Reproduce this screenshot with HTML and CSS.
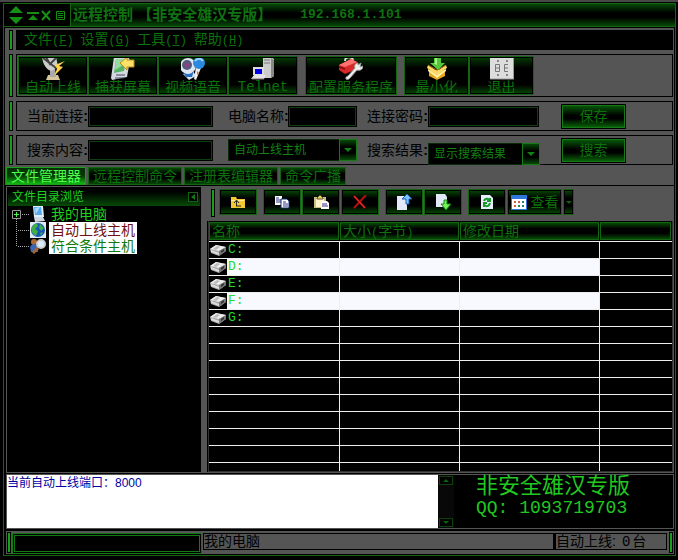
FILE: index.html
```html
<!DOCTYPE html>
<html lang="zh-CN">
<head>
<meta charset="utf-8">
<title>远程控制</title>
<link rel="stylesheet" href="styles.css">
</head>
<body>
<svg class="defs" aria-hidden="true">
  <symbol id="drive" viewBox="0 0 16 12">
    <path d="M0 5 6 1 16 3 16 7 9 12 1 9Z" fill="#aaa"/>
    <path d="M0 5 6 1 16 3 9 7Z" fill="#eee"/>
    <path d="M3 5 7 2 10 3 6 6Z" fill="#bbb"/>
    <path d="M9 7 16 3v4l-7 5Z" fill="#777"/>
    <path d="M1 6l8 3v2L1 8Z" fill="#ddd"/>
    <path d="M11 7l3-2v2l-3 2Z" fill="#333"/>
  </symbol>
</svg>
<div class="window">
  <header class="titlebar">
    <div class="sysbox">
      <svg width="57" height="18" viewBox="0 0 57 18" fill="#159015">
        <path d="M7 0 14 7H0ZM7 18 0 11H14Z"/>
        <path d="M18 6h12v2H18ZM24 9l5 5H19Z"/>
        <path d="M33 5l8 9M41 5l-8 9" stroke="#159015" stroke-width="2"/>
        <path d="M47.500 5.500h8v8h-8zM49 7.500h5M49 9.500h5M49 11.500h5" fill="none" stroke="#159015"/>
      </svg>
    </div>
    <h1>远程控制 【非安全雄汉专版】</h1>
    <span class="address">192.168.1.101</span>
  </header>

  <div class="chrome">
    <div class="band">
      <i class="grip"></i>
      <nav class="menu">
        <a href="#">文件<span>(<u>F</u>)</span></a>
        <a href="#">设置<span>(<u>G</u>)</span></a>
        <a href="#">工具<span>(<u>T</u>)</span></a>
        <a href="#">帮助<span>(<u>H</u>)</span></a>
      </nav>
    </div>

    <div class="band">
      <i class="grip"></i>
      <div class="toolbar">
        <div class="group">
          <button class="tool">
            <svg width="24" height="23" viewBox="0 0 24 23"><path d="M7 18h10l2 5H5Z" fill="#d8c8a0"/><path d="M9 11h5l1 9H9Z" fill="#aaa"/><path d="M1 0h14l2 9-6 5C5 13 2 7 1 0Z" fill="#ccc"/><path d="M2 1l13 10M5 0l4 7 7-7" stroke="#444" fill="none" stroke-width="2"/><path d="M24 4 14 8l2 4-3 7 9-9-4-1Z" fill="#ffd34a"/></svg>
            <span>自动上线</span></button>
          <button class="tool">
            <svg width="24" height="23" viewBox="0 0 24 23"><path d="M3 0h14l2 3-3 17-15 3L0 21Z" fill="#d5d9df"/><path d="M5 2h10l-2 12-10 2Z" fill="#55b565"/><path d="M5 2h10l-1 5-10 6Z" fill="#94dba0"/><path d="M5 18h9M4 21h9" stroke="#446"/><path d="M9 6l7-6v3h7v7h-7v3Z" fill="#ffe16a" stroke="#b98a18"/></svg>
            <span>捕获屏幕</span></button>
          <button class="tool">
            <svg width="24" height="23" viewBox="0 0 24 23"><path d="M2 17 12 14l3 5-7 4Z" fill="#d9e4f4"/><circle cx="7" cy="9" r="8" fill="#e2e8f2"/><path d="M0 12c3 7 11 6 13 1l-2 7H5Z" fill="#2b6fc4"/><circle cx="6" cy="8" r="5" fill="#555a80"/><circle cx="6" cy="8" r="2" fill="#a03878"/><path d="M15 10l5 1-5 12-2-1Z" fill="#eee"/><path d="M16 14l2 2-2 2Z" fill="#e06a20"/><circle cx="18" cy="6" r="6" fill="#2d88e0"/><path d="M14 4c3-4 6-2 8 0" stroke="#9cd3ff" fill="none" stroke-width="2"/></svg>
            <span>视频语音</span></button>
          <button class="tool">
            <svg width="24" height="23" viewBox="0 0 24 23"><path d="M12 0h8l3 2v17l-3 2h-8Z" fill="#ccc"/><path d="M20 1l3 2v16l-3 2Z" fill="#888"/><path d="M13 3h6M13 6h6" stroke="#777"/><path d="M2 10h11v8H2Z" fill="#ddd"/><path d="M4 12h7v5H4Z" fill="#0000e8"/><path d="M3 18h12l-2 4H0Z" fill="#e4e4e4"/><path d="M1 22h12" stroke="#777"/></svg>
            <span class="latin">Telnet</span></button>
        </div>
        <div class="group">
          <button class="tool wide">
            <svg width="24" height="23" viewBox="0 0 24 23"><path d="M6 4c0-5 8-5 8 0" stroke="#ddd" fill="none" stroke-width="2"/><path d="M0 8 12 2l6 3v7L6 17 0 13Z" fill="#d82828"/><path d="M0 8 12 2l6 3L6 10Z" fill="#ff7070"/><path d="M0 9l6 2v2l-6-2Z" fill="#8c0e0e"/><path d="M19 8l3-2-1 4 3-1c0 4-4 5-6 4l-7 8c-4 4-6-1-2-2l7-8c-1-2 0-5 3-5Z" fill="#eee" stroke="#999"/></svg>
            <span>配置服务程序</span></button>
        </div>
        <div class="group">
          <button class="tool narrow">
            <svg width="24" height="23" viewBox="0 0 24 23"><path d="M4 13h16v6l-8 4-8-4Z" fill="#e9a820"/><path d="M3 8l9 6 9-6 1 3-10 7L2 11Z" fill="#ffd96a"/><path d="M3 12l9 6 9-6v2l-9 7-9-7Z" fill="#fff1a0"/><path d="M3 8l9 5 9-5" stroke="#a06a00" fill="none"/><path d="M9 0h7v6h4l-7 7-8-7h4Z" fill="#54c83a"/><path d="M10 0h2v8l-4-2h2Z" fill="#a8f08a"/></svg>
            <span>最小化</span></button>
          <button class="tool narrow">
            <svg width="24" height="23" viewBox="0 0 24 23"><path d="M0 0h24v22H0Z" fill="#ddd"/><path d="M0 22h24M23.500 0v22" stroke="#999"/><path d="M5.500 7.500h4v7h-4zM6 11h4M18 7.500h-3.500v7H18M15 11h3" stroke="#777" fill="none"/><path d="M7 3h2v2H7ZM16 3h2v2h-2ZM7 17h2v2H7ZM16 17h2v2h-2Z" fill="#888"/></svg>
            <span>退出</span></button>
        </div>
      </div>
    </div>

    <div class="band">
      <i class="grip"></i>
      <form class="fields">
        <label for="conn">当前连接<b>:</b></label><input id="conn" type="text">
        <label class="second" for="pc">电脑名称<b>:</b></label><input id="pc" type="text">
        <label class="third" for="pwd">连接密码<b>:</b></label><input id="pwd" type="password">
        <button type="button" class="action">保存</button>
      </form>
    </div>

    <div class="band">
      <i class="grip"></i>
      <form class="fields">
        <label for="query">搜索内容<b>:</b></label><input id="query" type="text">
        <div class="combo scope"><select aria-label="搜索范围"><option>自动上线主机</option></select><i class="drop"></i></div>
        <label class="third" for="result">搜索结果<b>:</b></label>
        <div class="combo result"><select id="result"><option>显示搜索结果</option></select><i class="drop"></i></div>
        <button type="button" class="action">搜索</button>
      </form>
    </div>

    <div class="tabs">
      <button class="tab active">文件管理器</button>
      <button class="tab">远程控制命令</button>
      <button class="tab">注册表编辑器</button>
      <button class="tab">命令广播</button>
    </div>
  </div>

  <main class="workspace">
    <aside class="sidebar">
      <h2>文件目录浏览<button class="collapse" aria-label="折叠"><svg width="4" height="6" viewBox="0 0 4 6" fill="#117a11"><path d="M4 0v6L0 3Z"/></svg></button></h2>
      <div class="tree">
        <svg class="lines" width="18" height="48" viewBox="0 0 18 48" fill="none">
          <path d="M10 8.500h7M4.500 13v28M6 24.500h11M6 40.500h11" stroke="#aaa" stroke-dasharray="1 1"/>
          <path d="M.5 4.500h8v8h-8z" stroke="#999"/><path d="M2 8.500h5M4.500 6v5" stroke="#3fff3f"/>
        </svg>
        <ul>
          <li><svg width="16" height="16" viewBox="0 0 16 16"><path d="M3 0h10l1 11H4Z" fill="#e2edf8"/><path d="M4 1h7l1 8H5Z" fill="#56a8ec"/><path d="M5 2l5-1-4 7Z" fill="#a9dcff"/><path d="M4 11h9l2 4-10 1Z" fill="#cfd8e2"/></svg><a href="#" class="root">我的电脑</a></li>
          <li><svg width="16" height="16" viewBox="0 0 16 16"><path d="M0 0h16v16H0Z" fill="#dfeaf5"/><circle cx="8" cy="8" r="7" fill="#1756b8"/><path d="M2 5c3-5 6-4 6-1L5 7l3 2-2 5C2 12 1 9 2 5ZM10 2l4 4-3 3-2-3ZM10 11l3-1-2 4Z" fill="#3fae48"/></svg><a href="#" class="auto">自动上线主机</a></li>
          <li><svg width="16" height="16" viewBox="0 0 16 16"><circle cx="4" cy="4" r="3" fill="#b06a34"/><path d="M0 9c2-4 7-4 8 1v4H1Z" fill="#3867b7"/><path d="M8 10l-5 5" stroke="#a46638" stroke-width="3"/><circle cx="11" cy="6" r="4" fill="#d9ecff" stroke="#ccc" stroke-width="2"/></svg><a href="#" class="match">符合条件主机</a></li>
        </ul>
      </div>
    </aside>

    <section class="files">
      <div class="filebar">
        <i class="grip"></i>
        <div class="group"><button class="mini" aria-label="向上"><svg width="16" height="14" viewBox="0 0 16 14"><path d="M1 2h5l1 2h8v9H1Z" fill="#f3c832"/><path d="M1 5h13v1H1Z" fill="#fff0a0"/><path d="M6 11h5M6.500 11V6M4 8l2.500-3L9 8" stroke="#222" fill="none"/></svg></button></div>
        <div class="group">
          <button class="mini" aria-label="复制"><svg width="16" height="14" viewBox="0 0 16 14"><path d="M1 1h7v9H1Z" fill="#fff"/><path d="M2 3h3M2 5h5M2 7h5" stroke="#338"/><path d="M7 4h6l2 2v7H7Z" fill="#fff" stroke="#112a66"/><path d="M9 7h3M9 9h5M9 11h5" stroke="#338"/></svg></button>
          <button class="mini" aria-label="粘贴"><svg width="16" height="14" viewBox="0 0 16 14"><path d="M1 2h12v11H1Z" fill="#cbbd86"/><path d="M3 4h8v8H3Z" fill="#fff5c8"/><path d="M4 3l3-3 3 3v1H4Z" fill="#f0d040" stroke="#554"/><path d="M8 6h6l2 2v6H8Z" fill="#fff"/><path d="M9 9h5M9 11h6" stroke="#338"/></svg></button>
          <button class="mini" aria-label="删除"><svg width="16" height="14" viewBox="0 0 16 14"><path d="M2 1l11 12M14 0 2 13" stroke="#b01010" stroke-width="2"/><path d="M2 1l11 12" stroke="#f33"/></svg></button>
        </div>
        <div class="group">
          <button class="mini" aria-label="上传"><svg width="16" height="16" viewBox="0 0 16 16"><path d="M1 2h10v14H1Z" fill="#e4e9fa"/><path d="M10 9V5H6l5-5 5 5h-3v5h-3Z" fill="#78c4ff" stroke="#1c5fb0"/></svg></button>
          <button class="mini" aria-label="下载"><svg width="16" height="16" viewBox="0 0 16 16"><path d="M1 0h9l2 3v10H1Z" fill="#e4e9fa"/><path d="M9 6h3v4h4l-5 6-5-6h3Z" fill="#73f05a" stroke="#168a16"/></svg></button>
        </div>
        <div class="group">
          <button class="mini" aria-label="刷新"><svg width="14" height="16" viewBox="0 0 14 16"><path d="M1 1h9l3 3v11H1Z" fill="#e7eefc"/><path d="M4 7c1-3 5-3 6 0M10 4v3H7M10 9c-1 4-5 4-6 1M4 13V9h3" stroke="#199a28" stroke-width="2" fill="none"/></svg></button>
          <button class="mini view"><svg width="16" height="15" viewBox="0 0 16 15"><path d="M0 0h16v15H0Z" fill="#2e78dc"/><path d="M1 4h14v10H1Z" fill="#fff"/><path d="M3 6h2v2H3ZM7 6h2v2H7ZM3 10h2v2H3Z" fill="#d65b38"/><path d="M11 6h2v2h-2ZM7 10h2v2H7ZM11 10h2v2h-2Z" fill="#2b7d6a"/></svg><span>查看</span></button>
          <button class="mini more" aria-label="更多"><svg width="6" height="3" viewBox="0 0 6 3"><path d="M0 0h6L3 3Z" fill="#0f600f"/></svg></button>
        </div>
      </div>
      <div class="listing">
        <table>
          <colgroup><col class="name"><col class="size"><col class="date"><col></colgroup>
          <thead><tr><th><div>名称</div></th><th><div>大小<span class="latin">(</span>字节<span class="latin">)</span></div></th><th><div>修改日期</div></th><th><div></div></th></tr></thead>
          <tbody>
            <tr><td><span class="drive"><svg width="16" height="12"><use href="#drive"/></svg></span>C:</td><td></td><td></td><td></td></tr>
            <tr class="lit"><td><span class="drive"><svg width="16" height="12"><use href="#drive"/></svg></span>D:</td><td></td><td></td><td></td></tr>
            <tr><td><span class="drive"><svg width="16" height="12"><use href="#drive"/></svg></span>E:</td><td></td><td></td><td></td></tr>
            <tr class="lit"><td><span class="drive"><svg width="16" height="12"><use href="#drive"/></svg></span>F:</td><td></td><td></td><td></td></tr>
            <tr><td><span class="drive"><svg width="16" height="12"><use href="#drive"/></svg></span>G:</td><td></td><td></td><td></td></tr>
            <tr><td></td><td></td><td></td><td></td></tr>
            <tr><td></td><td></td><td></td><td></td></tr>
            <tr><td></td><td></td><td></td><td></td></tr>
            <tr><td></td><td></td><td></td><td></td></tr>
            <tr><td></td><td></td><td></td><td></td></tr>
            <tr><td></td><td></td><td></td><td></td></tr>
            <tr><td></td><td></td><td></td><td></td></tr>
            <tr><td></td><td></td><td></td><td></td></tr>
            <tr><td></td><td></td><td></td><td></td></tr>
          </tbody>
        </table>
      </div>
    </section>
  </main>

  <section class="console">
    <div class="log">当前自动上线端口：8000</div>
    <div class="scroll">
      <button aria-label="向上滚动"><svg width="6" height="3" viewBox="0 0 6 3"><path d="M0 3h6L3 0Z" fill="#0f600f"/></svg></button>
      <button aria-label="向下滚动"><svg width="6" height="3" viewBox="0 0 6 3"><path d="M0 0h6L3 3Z" fill="#0f600f"/></svg></button>
    </div>
    <div class="brand"><p>非安全雄汉专版</p><p class="latin">QQ: 1093719703</p></div>
  </section>

  <footer class="status">
    <i class="grip"></i>
    <div class="progress"></div>
    <div class="place">我的电脑</div>
    <div class="online">自动上线:<span class="latin">0</span>台</div>
    <i class="grip"></i>
  </footer>
</div>
</body>
</html>
```
FILE: styles.css
```css
* { box-sizing: border-box; }

:root {
  --gray: #555;
  --line: #146414;
  --text: #0c720c;
  --glow: linear-gradient(#064a06, #000 35%, #000 65%, #064a06);
}

body {
  margin: 0;
  background: #000;
  border-top: 2px solid #484848;
  color: var(--text);
  font: 14px/16px "Liberation Sans", "Noto Sans CJK SC", sans-serif;
}

h1, h2, p, ul { margin: 0; padding: 0; font-weight: normal; }
ul { list-style: none; }
a { color: inherit; text-decoration: none; }
button, input, select {
  margin: 0;
  padding: 0;
  border-radius: 0;
  color: inherit;
  font: inherit;
}
.defs { display: none; }
.latin { font-family: "Liberation Mono", monospace; }

.window {
  display: flex;
  flex-direction: column;
  height: calc(100vh - 7px);
  min-height: 420px;
  margin: 1px 2px 4px 3px;
  border: 1px solid var(--line);
}

.titlebar {
  display: flex;
  align-items: center;
  height: 23px;
  flex: none;
  border-bottom: 1px solid var(--line);
  background: linear-gradient(#064a06, #000 40%, #000 60%, #064a06);
}
.sysbox {
  display: flex;
  align-items: center;
  align-self: stretch;
  width: 67px;
  padding-left: 5px;
  border-right: 1px solid var(--line);
  background: #000;
}
.sysbox svg { flex: none; }
h1 {
  margin-left: 2px;
  color: #107210;
  font-size: 15px;
  font-weight: bold;
  line-height: 20px;
  white-space: nowrap;
}
.address {
  margin-left: 28px;
  color: #107210;
  font: bold 13px/20px "Liberation Mono", monospace;
}

.chrome {
  flex: none;
  margin: 1px 1px 0;
  padding: 2px 1px 0;
  background: var(--gray);
}
.band { display: flex; margin-bottom: 4px; }
.grip {
  flex: none;
  width: 4px;
  margin: 0 3px;
  border: 1px solid #000;
  background: #18a018;
}
.menu {
  display: flex;
  flex: 1;
  gap: 7px;
  height: 20px;
  padding-left: 8px;
  background: #000;
  line-height: 19px;
}
.menu span { font: 12px/19px "Liberation Mono", monospace; }

.toolbar, .fields {
  display: flex;
  flex: 1;
  min-width: 0;
  border: 1px solid #000;
}
.toolbar { gap: 7px; padding: 1px; }
.group { display: flex; }
.tool {
  display: flex;
  flex-direction: column;
  align-items: center;
  width: 70px;
  height: 39px;
  border: 1px solid var(--line);
  outline: 1px solid #000;
  outline-offset: -2px;
  background: linear-gradient(#043c04, #000 30%, #000 75%, #064a06);
  white-space: nowrap;
}
.tool.wide { width: 92px; }
.tool.narrow { width: 65px; }
.tool svg { flex: none; }
.tool span { line-height: 14px; }
.tool .latin { font-size: 14px; }

.fields { height: 30px; align-items: center; padding-left: 10px; color: #000; }
.fields label {
  display: flex;
  justify-content: space-between;
  width: 61px;
  line-height: 20px;
  white-space: nowrap;
}
.fields label b { font-weight: bold; }
.fields .second { width: 60px; margin-left: 15px; }
.fields .third { margin-left: 10px; }
.fields input {
  width: 125px;
  height: 21px;
  border: 2px solid #0d400d;
  outline: 1px solid #000;
  outline-offset: -1px;
  background: #000;
  color: var(--text);
}
.fields #pc { width: 69px; }
.fields #pwd { width: 111px; margin-right: 1px; }
.action {
  width: 63px;
  height: 23px;
  margin-left: 22px;
  border: 1px solid #157a15;
  outline: 1px solid #000;
  background: linear-gradient(#075507, #000 45%, #000 60%, #086008);
  color: var(--text);
}
.combo {
  position: relative;
  height: 22px;
  background: #000;
  color: #128012;
}
.scope { width: 129px; margin-left: 15px; }
.result { width: 112px; align-self: flex-end; margin-bottom: -1px; }
.combo select {
  display: block;
  width: 100%;
  height: 100%;
  padding-left: 5px;
  appearance: none;
  border: 1px solid #0a2a0a;
  background: transparent;
  font-size: 12px;
}
.drop {
  position: absolute;
  inset: 0 0 0 auto;
  display: grid;
  place-items: center;
  width: 18px;
  border: 1px solid #157a15;
  background: var(--glow);
  pointer-events: none;
}
.drop::after {
  content: "";
  border: 4px solid transparent;
  border-top-color: #128012;
  border-bottom: 0;
}

.tabs { display: flex; gap: 2px; margin-top: -2px; }
.tab {
  height: 18px;
  padding: 0 4px;
  border: 1px solid var(--line);
  background: var(--glow);
  line-height: 16px;
}
.tab.active {
  background: linear-gradient(#042f04, #053b05 50%, #14b814);
  border-color: #18a018;
  color: #4cff4c;
}

.workspace {
  display: flex;
  flex: 1 1 0;
  min-height: 0;
  margin: 1px 1px 0 2px;
  border: 1px solid var(--gray);
}
.sidebar {
  flex: none;
  width: 194px;
  padding: 1px 1px 0;
}
.sidebar h2 {
  display: flex;
  align-items: center;
  justify-content: space-between;
  height: 18px;
  padding: 0 2px 0 4px;
  background: linear-gradient(#000, #000 20%, #064a06);
  color: #1fd01f;
  font-size: 12px;
}
.collapse {
  display: grid;
  place-items: center;
  width: 10px;
  height: 10px;
  border: 1px solid var(--line);
  background: #000;
}
.tree { display: flex; padding-left: 4px; color: #1fd01f; }
.lines { flex: none; }
.tree li { display: flex; height: 16px; }
.tree li a { margin-left: 3px; padding: 0 2px; line-height: 16px; white-space: nowrap; }
.tree .auto { background: #fff; color: #701010; }
.tree .match { background: #fff; color: #117a11; }

.files {
  display: flex;
  flex: 1;
  flex-direction: column;
  min-width: 0;
  border-left: 6px solid var(--gray);
}
.filebar {
  display: flex;
  gap: 6px;
  height: 34px;
  flex: none;
  padding: 2px 0 6px 1px;
  background: var(--gray);
}
.filebar .grip { height: 28px; margin: 0 -2px 0 3px; }
.filebar .group { gap: 1px; }
.mini {
  display: flex;
  align-items: center;
  justify-content: center;
  width: 38px;
  height: 26px;
  border: 1px solid var(--line);
  outline: 1px solid #000;
  outline-offset: -2px;
  background: var(--glow);
}
.mini.view { width: 55px; gap: 4px; }
.mini.more { width: 11px; }
.mini span { line-height: 20px; white-space: nowrap; }

.listing {
  flex: 1;
  min-height: 0;
  margin-left: 1px;
  overflow: hidden;
  border: solid #333;
  border-width: 0 1px 1px;
}
table { width: 100%; border-spacing: 0; table-layout: fixed; }
.name { width: 131px; }
.size { width: 120px; }
.date { width: 140px; }
th { height: 20px; padding: 1px 1px 1px 0; font-weight: normal; text-align: left; }
th div {
  height: 18px;
  padding-left: 2px;
  border: 1px solid var(--line);
  background: var(--glow);
  line-height: 16px;
  white-space: nowrap;
}
th .latin { font-size: 12px; }
td {
  height: 17px;
  padding: 0;
  border-top: 1px solid #eee;
  border-right: 1px solid #eee;
  color: #28d828;
  font: 13px/16px "Liberation Mono", monospace;
}
td:last-child { border-right: 0; }
.lit td:not(:last-child) { background: #f8f8ff; }
.drive {
  display: inline-flex;
  align-items: center;
  width: 18px;
  height: 16px;
  padding-left: 1px;
  margin-right: 1px;
  background: #000;
  vertical-align: top;
}

.console {
  display: flex;
  flex: none;
  height: 55px;
  margin: 1px 1px 0 2px;
  border: 1px solid var(--gray);
}
.log {
  flex: 1;
  background: #fff;
  color: #0000a0;
  font-size: 12px;
}
.scroll {
  display: flex;
  flex-direction: column;
  justify-content: space-between;
  width: 16px;
  padding: 1px;
  background: #080808;
}
.scroll button {
  display: grid;
  place-items: center;
  width: 14px;
  height: 9px;
  border: 1px solid #0a420a;
  background: #000;
}
.brand {
  width: 219px;
  padding-left: 22px;
  color: #20c820;
  font-size: 22px;
  line-height: 22px;
  white-space: nowrap;
}
.brand .latin { font-size: 18px; }

.status {
  display: flex;
  flex: none;
  height: 23px;
  margin: 2px 1px 1px 2px;
  background: var(--gray);
  color: #000;
}
.status .grip { margin: 1px; }
.status .progress {
  width: 190px;
  margin: 2px 0 0;
  border: 1px solid #157a15;
  outline: 1px solid #157a15;
  outline-offset: -3px;
  background: #000;
}
.place, .online {
  height: 17px;
  margin-top: 2px;
  border: 1px solid #000;
  line-height: 15px;
}
.place { flex: 1; margin-left: 1px; }
.online { width: 113px; margin-right: 1px; border-left-width: 2px; }
.online .latin { padding: 0 2px 0 6px; }
```
